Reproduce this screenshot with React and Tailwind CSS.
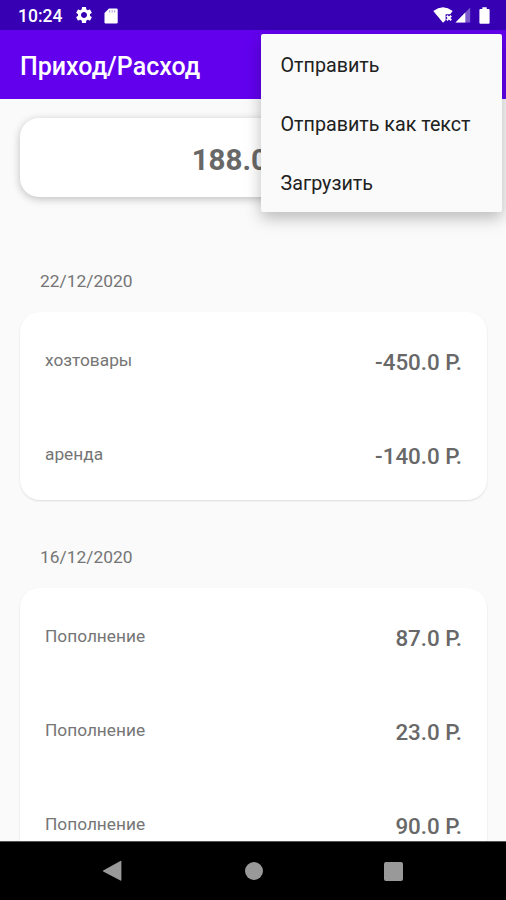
import { useState } from 'react';

const groups = [
  {
    date: '22/12/2020',
    items: [
      { id: 1, title: 'хозтовары', amount: -450 },
      { id: 2, title: 'аренда', amount: -140 }
    ]
  },
  {
    date: '16/12/2020',
    items: [
      { id: 3, title: 'Пополнение', amount: 87 },
      { id: 4, title: 'Пополнение', amount: 23 },
      { id: 5, title: 'Пополнение', amount: 90 }
    ]
  }
];

const menuItems = ['Отправить', 'Отправить как текст', 'Загрузить'];

const formatAmount = (amount) => `${amount.toFixed(1)} Р.`;

function StatusBar() {
  return (
    <div className="h-[30px] shrink-0 bg-[#3700b3] pl-[18px] pr-[16px] flex items-center text-white">
      <span className="w-[56px] text-[17.5px] leading-[30px] pt-[2px] font-medium">10:24</span>
      {/* Settings */}
      <svg className="w-[20px] h-[20px]" viewBox="0 0 24 24" fill="currentColor">
        <path d="M19.14 12.94c.04-.3.06-.61.06-.94 0-.32-.02-.64-.07-.94l2.03-1.58c.18-.14.23-.41.12-.61l-1.92-3.32c-.12-.22-.37-.29-.59-.22l-2.39.96c-.5-.38-1.03-.7-1.62-.94l-.36-2.54c-.04-.24-.24-.41-.48-.41h-3.84c-.24 0-.43.17-.47.41l-.36 2.54c-.59.24-1.13.57-1.62.94l-2.39-.96c-.22-.08-.47 0-.59.22L2.74 8.87c-.12.21-.08.47.12.61l2.03 1.58c-.05.3-.09.63-.09.94s.02.64.07.94l-2.03 1.58c-.18.14-.23.41-.12.61l1.92 3.32c.12.22.37.29.59.22l2.39-.96c.5.38 1.03.7 1.62.94l.36 2.54c.05.24.24.41.48.41h3.84c.24 0 .44-.17.47-.41l.36-2.54c.59-.24 1.13-.56 1.62-.94l2.39.96c.22.08.47 0 .59-.22l1.92-3.32c.12-.22.07-.47-.12-.61l-2.01-1.58zM12 15.6c-1.98 0-3.6-1.62-3.6-3.6s1.62-3.6 3.6-3.6 3.6 1.62 3.6 3.6-1.62 3.6-3.6 3.6z" />
      </svg>
      {/* SD card */}
      <svg className="w-[14px] h-[16px] ml-[10px] mt-px" viewBox="0 0 14 16">
        <path d="M5 0.5H12.5Q13.7 0.5 13.7 1.7V14.3Q13.7 15.5 12.5 15.5H1.7Q0.5 15.5 0.5 14.3V5Z" fill="#fff" />
        <path d="M5.7 2.2V4.6M8.2 2.2V4.6M10.7 2.2V4.6" stroke="#3700b3" strokeOpacity="0.4" strokeWidth="1.1" />
      </svg>
      {/* Wi-Fi without internet */}
      <svg className="w-[20px] h-[16px] ml-auto" viewBox="0 0 20 16">
        <path d="M0.3 4Q10 -3.4 19.7 4L17.2 7.3H12.6V13.3L10 15.8Z" fill="#fff" />
        <path d="M13.8 8.8L18.2 13.2M18.2 8.8L13.8 13.2" stroke="#fff" strokeWidth="2" />
      </svg>
      {/* Cell signal */}
      <svg className="w-[16px] h-[16px] ml-[2px]" viewBox="0 0 16 16">
        <path d="M15.2 0.5V15.5H0.5Z" fill="#fff" fillOpacity="0.35" />
        <path d="M10.3 5.5V15.5H0.5Z" fill="#fff" />
      </svg>
      {/* Battery */}
      <svg className="w-[11px] h-[17px] ml-[8px]" viewBox="0 0 11 17">
        <path d="M3.3 0.3H7.7V2H9.6Q10.6 2 10.6 3V15.7Q10.6 16.7 9.6 16.7H1.4Q0.4 16.7 0.4 15.7V3Q0.4 2 1.4 2H3.3Z" fill="#fff" />
      </svg>
    </div>
  );
}

function NavBar() {
  return (
    <div className="h-[59px] shrink-0 bg-black border-t border-[#555] flex items-center justify-between pl-[102px] pr-[103px] text-[#999]">
      <svg className="w-[21px] h-[22px]" viewBox="0 0 21 22" fill="currentColor">
        <path d="M1.2 10.4L18.4 0.9Q19.4 0.5 19.4 1.6V20Q19.4 21.2 18.4 20.6L1.2 11.5Q0.4 11 1.2 10.4Z" />
      </svg>
      <div className="w-[18px] h-[18px] rounded-full bg-[#999]" />
      <div className="w-[19px] h-[19px] rounded-[2px] bg-[#999]" />
    </div>
  );
}

export default function App() {
  const [menuOpen, setMenuOpen] = useState(true);

  return (
    <div className="relative w-[506px] h-[900px] overflow-hidden flex flex-col bg-[#fafafa] font-['Roboto',sans-serif]">
      <StatusBar />

      <div className="h-[69px] shrink-0 bg-[#6200ee] px-5 flex items-center" onClick={() => setMenuOpen(!menuOpen)}>
        <h1 className="text-[25px] leading-[30px] pt-[5px] font-medium text-white">Приход/Расход</h1>
      </div>

      <div className="flex-1 min-h-0 overflow-hidden pl-5 pr-[19px]">
        <div className="h-[79px] mt-[19px] mb-[67px] rounded-[19px] bg-white shadow-[0_2px_8px_rgba(0,0,0,0.24)] flex items-center justify-center text-[29.5px] font-bold text-[#686868]">
          <span className="pt-[6px] pr-[18px]">{formatAmount(188)}</span>
        </div>

        {groups.map(group => (
          <div key={group.date} className="mb-[40px]">
            <div className="h-[34px] mb-[14px] pl-5 flex items-center text-[17.4px] text-[#757575]">
              {group.date}
            </div>
            <div className="rounded-[20px] bg-white shadow-[0_1px_2px_rgba(0,0,0,0.12)]">
              {group.items.map(item => (
                <div key={item.id} className="h-[94px] pl-[25px] pr-[25px] flex items-center justify-between">
                  <span className="pt-[3px] text-[17.3px] text-[#757575]">{item.title}</span>
                  <span className="pt-[8px] text-[22.4px] font-medium text-[#686868]">{formatAmount(item.amount)}</span>
                </div>
              ))}
            </div>
          </div>
        ))}
      </div>

      <NavBar />

      {menuOpen && (
        <div className="absolute left-[261px] top-[34px] w-[241px] h-[178px] rounded-[2px] bg-[#fafafa] shadow-[0_6px_16px_rgba(0,0,0,0.26)]">
          {menuItems.map(label => (
            <button key={label} className="w-full h-[59px] pl-[19.5px] pt-[4px] flex items-center text-[19.7px] text-[#212121]">
              {label}
            </button>
          ))}
        </div>
      )}
    </div>
  );
}
